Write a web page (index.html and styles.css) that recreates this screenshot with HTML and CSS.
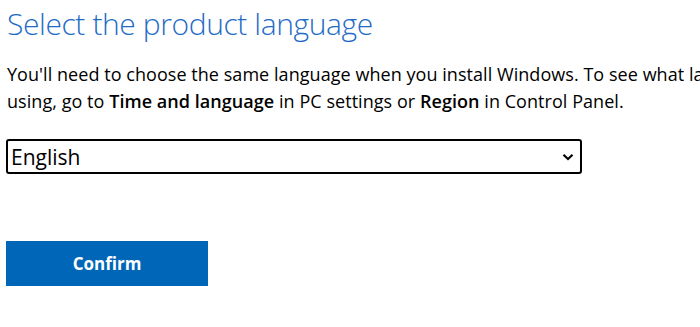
FILE: index.html
```html
<!DOCTYPE html>
<html lang="en">
<head>
<meta charset="utf-8">
<title>Select the product language</title>
<link rel="stylesheet" href="styles.css">
</head>
<body>
<main class="page">
  <h2 class="title">Select the product language</h2>
  <p class="desc">You'll need to choose the same language when you install Windows. To see what language you're currently<br>using, go to <b>Time and language</b> in PC settings or <b>Region</b> in Control Panel.</p>
  <div class="select">
    <span class="select-value">English</span>
    <svg class="chevron" width="12" height="8" viewBox="0 0 12 8"><path d="M1.5 1.8 L6 6 L10.5 1.8" fill="none" stroke="#000" stroke-width="2.2"/></svg>
  </div>
  <button class="confirm" type="button">Confirm</button>
</main>
</body>
</html>
```

FILE: styles.css
```css
html, body {
  margin: 0;
  padding: 0;
  background: #fff;
  overflow: hidden;
}
.page {
  padding: 0 0 0 7px;
  font-family: "Open Sans", "Noto Sans", sans-serif;
  color: #000;
  width: 1300px;
}
.title {
  margin: 0;
  padding-top: 4px;
  font-size: 30px;
  font-weight: 300;
  color: #1f6cc6;
  line-height: 40px;
  letter-spacing: -0.4px;
}
.desc {
  margin: 17px 0 0 0;
  font-size: 18px;
  line-height: 27px;
  white-space: nowrap;
  letter-spacing: 0.05px;
}
.desc b {
  font-weight: 600;
}
.select {
  margin: 24px 0 0 -1px;
  box-sizing: border-box;
  width: 576px;
  height: 35px;
  border: 2px solid #000;
  border-radius: 3px;
  display: flex;
  align-items: center;
  justify-content: space-between;
  padding: 0 6px 0 3px;
}
.select-value {
  font-size: 21px;
}
.chevron {
  display: block;
}
.confirm {
  display: block;
  margin: 67px 0 0 -1px;
  width: 202px;
  height: 45px;
  border: 0;
  background: #0067b8;
  color: #fff;
  font-family: "Open Sans", "Noto Sans", sans-serif;
  font-size: 17px;
  font-weight: 700;
}
```
